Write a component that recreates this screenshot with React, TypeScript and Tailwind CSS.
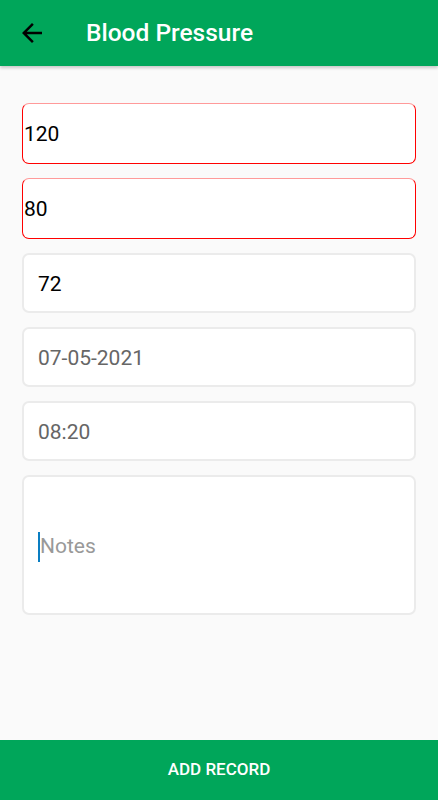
import React from "react";

export default function App() {
  const font = { fontFamily: "Roboto, 'Noto Sans', sans-serif" };
  return (
    <div className="w-[438px] h-[800px] bg-[#fafafa] flex flex-col overflow-hidden" style={font}>
      <header className="h-[66px] bg-[#00a65a] flex items-center shadow-[0_2px_3px_rgba(0,0,0,0.2)] z-10 shrink-0">
        <div className="w-[86px] flex items-center pl-[17px]">
          <svg width="30" height="30" viewBox="0 0 24 24">
            <path d="M20 11H7.83l5.59-5.59L12 4l-8 8 8 8 1.41-1.41L7.83 13H20v-2z" fill="#000" />
          </svg>
        </div>
        <h1 className="text-white text-[24.5px] font-medium leading-none">Blood Pressure</h1>
      </header>
      <main className="flex-1 px-[22px] pt-[37px] flex flex-col gap-[14px]">
        <div className="h-[61px] bg-white rounded-[7px] border border-[#ff0000] border-t-[#ff9a9a] flex items-center pl-[1px] pt-[3px] text-[21px] text-black">120</div>
        <div className="h-[61px] bg-white rounded-[7px] border border-[#ff0000] border-t-[#ff9a9a] flex items-center pl-[1px] pt-[3px] text-[21px] text-black">80</div>
        <div className="h-[60px] bg-white rounded-[7px] border-2 border-[#ebebeb] flex items-center pl-[14px] pt-[3px] text-[21px] text-black">72</div>
        <div className="h-[60px] bg-white rounded-[7px] border-2 border-[#ebebeb] flex items-center pl-[14px] pt-[3px] text-[21px] text-[#666]">07-05-2021</div>
        <div className="h-[60px] bg-white rounded-[7px] border-2 border-[#ebebeb] flex items-center pl-[14px] pt-[3px] text-[21px] text-[#666]">08:20</div>
        <div className="h-[140px] bg-white rounded-[7px] border-2 border-[#ebebeb] flex items-center pl-[14px] pt-[3px] text-[21px] text-[#999]">
          <span className="w-[2px] h-[30px] bg-[#0a7ec2]" />
          <span>Notes</span>
        </div>
      </main>
      <footer className="h-[60px] bg-[#00a65a] flex items-center justify-center text-white text-[17px] font-medium shrink-0">ADD RECORD</footer>
    </div>
  );
}
